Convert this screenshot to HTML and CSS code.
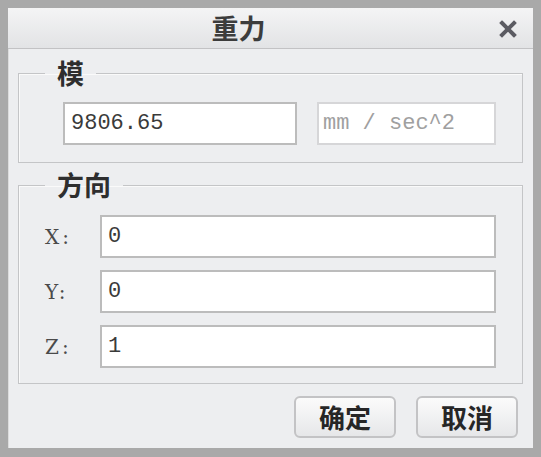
FILE: index.html
```html
<!DOCTYPE html>
<html lang="zh">
<head>
<meta charset="UTF-8">
<title>重力</title>
<link rel="stylesheet" href="styles.css">
</head>
<body>
<div class="dialog">
    <div class="title-bar">
        <span class="title">重力</span>
        <span class="close-btn">
            <svg width="18" height="18" viewBox="0 0 18 18">
                <path d="M3 3 L15 15 M15 3 L3 15" stroke="#5b5b62" stroke-width="4" stroke-linecap="square"/>
            </svg>
        </span>
    </div>

    <div class="dialog-body">
        <fieldset class="group group-magnitude">
            <legend>模</legend>
            <div class="row">
                <div class="field value-field">9806.65</div>
                <div class="field unit-field">mm / sec^2</div>
            </div>
        </fieldset>

        <fieldset class="group group-direction">
            <legend>方向</legend>
            <div class="axis-list">
                <div class="axis-row">
                    <span class="axis-label">X:</span>
                    <div class="field axis-field">0</div>
                </div>
                <div class="axis-row">
                    <span class="axis-label">Y:</span>
                    <div class="field axis-field">0</div>
                </div>
                <div class="axis-row">
                    <span class="axis-label">Z:</span>
                    <div class="field axis-field">1</div>
                </div>
            </div>
        </fieldset>

        <div class="button-row">
            <button class="btn">确定</button>
            <button class="btn">取消</button>
        </div>
    </div>
</div>
</body>
</html>
```

FILE: styles.css
```css
body {
    margin: 0;
    padding: 0;
    background: #9d9d9d;
    font-family: "Noto Sans CJK SC", "Liberation Sans", sans-serif;
}

.dialog {
    width: 541px;
    height: 457px;
    box-sizing: border-box;
    border: 8px solid #a9a9a9;
    border-bottom-width: 9px;
    background: #edeef0;
    display: flex;
    flex-direction: column;
    box-shadow: inset 1px 1px 0 #dcdcdc;
}

.title-bar {
    height: 41px;
    box-sizing: border-box;
    padding-right: 64px;
    border-bottom: 1px solid #c2c2c4;
    background: linear-gradient(to bottom, #f4f4f5, #e2e3e5);
    display: flex;
    align-items: center;
    justify-content: center;
    position: relative;
}

.title {
    font-size: 27px;
    font-weight: bold;
    color: #3c3c3c;
    line-height: 30px;
}

.close-btn {
    position: absolute;
    right: 16px;
    top: 11px;
    width: 18px;
    height: 18px;
}

.dialog-body {
    flex: 1;
    display: flex;
    flex-direction: column;
}

.group {
    margin: 7px 10px 0 10px;
    padding: 0 26px 15px 26px;
    border: 1px solid #c4c5c7;
    box-shadow: inset 1px 1px 0 #fafafa;
}

.group legend {
    margin-left: 0;
    padding: 0 12px;
    font-size: 27px;
    font-weight: bold;
    line-height: 30px;
    color: #2e2e2e;
}

.group-magnitude {
    margin-top: 9px;
    padding-bottom: 17px;
}

.row {
    display: flex;
    gap: 20px;
    margin: 14px 0 0 18px;
}

.field {
    height: 43px;
    box-sizing: border-box;
    background: #ffffff;
    border: 2px solid #bcbcbc;
    display: flex;
    align-items: center;
    padding-left: 6px;
    font-family: "Liberation Mono", monospace;
    font-size: 22px;
    color: #3a3a3a;
}

.value-field {
    width: 234px;
}

.unit-field {
    width: 179px;
    border-color: #d6d6d8;
    color: #a0a0a0;
    padding-left: 4px;
}

.axis-list {
    display: flex;
    flex-direction: column;
    gap: 12px;
    margin-top: 15px;
}

.axis-row {
    display: flex;
    align-items: center;
}

.axis-label {
    width: 55px;
    font-family: "DejaVu Serif", serif;
    font-size: 20px;
    letter-spacing: 3px;
    color: #4a4a4a;
}

.axis-field {
    width: 396px;
}

.button-row {
    display: flex;
    justify-content: flex-end;
    gap: 20px;
    margin: 12px 15px 0 0;
}

.btn {
    width: 102px;
    height: 42px;
    border: 2px solid #c3c3c5;
    border-radius: 6px;
    background: linear-gradient(to bottom, #fbfbfb, #e6e7e9);
    font-family: "Noto Sans CJK SC", sans-serif;
    font-size: 26px;
    font-weight: bold;
    color: #262626;
    padding: 0;
    line-height: 1;
}
```
